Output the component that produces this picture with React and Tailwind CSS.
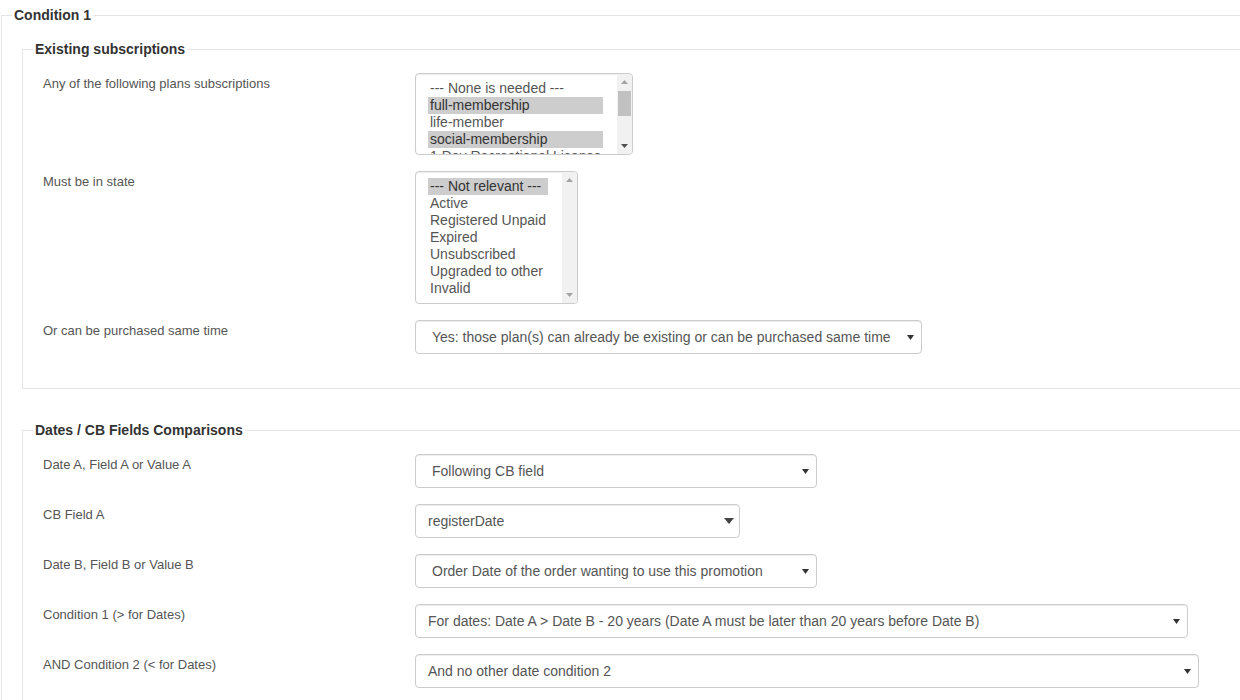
import React from 'react';

const font = { fontFamily: '"Liberation Sans", Arial, sans-serif' };

function Arrow({ big }) {
  if (big) {
    return (
      <svg width="10" height="6" viewBox="0 0 10 6" className="shrink-0">
        <polygon points="0,0 10,0 5,6" fill="#444" />
      </svg>
    );
  }
  return (
    <svg width="7" height="5" viewBox="0 0 7 5" className="shrink-0">
      <polygon points="0,0 7,0 3.5,5" fill="#333" />
    </svg>
  );
}

function Select({ width, text, pad = 'pl-4', big }) {
  return (
    <div
      className={`flex h-[34px] items-center justify-between rounded border border-[#ccc] bg-white ${pad} ${big ? 'pr-[5px]' : 'pr-[7px]'} text-[14px] text-[#555] shadow-[inset_0_1px_1px_rgba(0,0,0,0.075)]`}
      style={{ width }}
    >
      <span className="whitespace-nowrap">{text}</span>
      <Arrow big={big} />
    </div>
  );
}

function Scrollbar({ thumb }) {
  return (
    <div className="relative flex w-[15px] shrink-0 flex-col items-center justify-between bg-[#f1f1f1] py-[6px]">
      <svg width="7" height="4" viewBox="0 0 7 4">
        <polygon points="0,4 7,4 3.5,0" fill="#a3a3a3" />
      </svg>
      {thumb && (
        <div className="absolute left-[1px] top-[17px] h-[25px] w-[13px] bg-[#c1c1c1]" />
      )}
      <svg width="7" height="4" viewBox="0 0 7 4">
        <polygon points="0,0 7,0 3.5,4" fill={thumb ? '#505050' : '#a3a3a3'} />
      </svg>
    </div>
  );
}

function MultiSelect({ width, height, options, selected, pt, thumb }) {
  return (
    <div
      className="flex overflow-hidden rounded border border-[#ccc] bg-white shadow-[inset_0_1px_1px_rgba(0,0,0,0.075)]"
      style={{ width, height }}
    >
      <div className={`min-w-0 flex-1 overflow-hidden pl-3 pr-[14px] ${pt}`}>
        {options.map((o, i) => (
          <div
            key={i}
            className={`whitespace-nowrap px-[2px] text-[14px] leading-[17px] ${
              selected.includes(i) ? 'bg-[#cdcdcd] text-[#333]' : 'text-[#555]'
            }`}
          >
            {o}
          </div>
        ))}
      </div>
      <Scrollbar thumb={thumb} />
    </div>
  );
}

function Row({ label, children }) {
  return (
    <div className="flex">
      <div className="w-[372px] shrink-0 pt-[1px] text-[13px] leading-[20px] text-[#555]">{label}</div>
      {children}
    </div>
  );
}

function Legend({ children }) {
  return (
    <legend className="ml-[10px] px-[2px] text-[14px] font-bold leading-[20px] text-[#333]">
      {children}
    </legend>
  );
}

export default function App() {
  return (
    <div className="h-[700px] w-full overflow-hidden bg-white pl-[1px] pt-[5px]" style={font}>
      <fieldset className="w-[1280px] border border-[#e5e5e5] pb-10">
        <Legend>Condition 1</Legend>

        <fieldset className="ml-[20px] mt-[14px] w-[1250px] border border-[#e5e5e5]">
          <Legend>Existing subscriptions</Legend>
          <div className="flex flex-col gap-4 pb-[34px] pl-[20px] pt-[14px]">
            <Row label="Any of the following plans subscriptions">
              <MultiSelect
                width="218px"
                height="82px"
                pt="pt-[6px]"
                thumb
                selected={[1, 3]}
                options={[
                  '--- None is needed ---',
                  'full-membership',
                  'life-member',
                  'social-membership',
                  '1 Day Recreational License',
                ]}
              />
            </Row>
            <Row label="Must be in state">
              <MultiSelect
                width="163px"
                height="133px"
                pt="pt-[6px]"
                selected={[0]}
                options={[
                  '--- Not relevant ---',
                  'Active',
                  'Registered Unpaid',
                  'Expired',
                  'Unsubscribed',
                  'Upgraded to other',
                  'Invalid',
                ]}
              />
            </Row>
            <Row label="Or can be purchased same time">
              <Select width="507px" text="Yes: those plan(s) can already be existing or can be purchased same time" />
            </Row>
          </div>
        </fieldset>

        <fieldset className="ml-[20px] mt-[31px] w-[1250px] border border-[#e5e5e5]">
          <Legend>Dates / CB Fields Comparisons</Legend>
          <div className="flex flex-col gap-4 pb-[34px] pl-[20px] pt-[14px]">
            <Row label="Date A, Field A or Value A">
              <Select width="402px" text="Following CB field" />
            </Row>
            <Row label="CB Field A">
              <Select width="325px" text="registerDate" pad="pl-3" big />
            </Row>
            <Row label="Date B, Field B or Value B">
              <Select width="402px" text="Order Date of the order wanting to use this promotion" />
            </Row>
            <Row label="Condition 1 (> for Dates)">
              <Select
                width="773px"
                pad="pl-3"
                text="For dates: Date A > Date B - 20 years (Date A must be later than 20 years before Date B)"
              />
            </Row>
            <Row label="AND Condition 2 (< for Dates)">
              <Select width="784px" pad="pl-3" text="And no other date condition 2" />
            </Row>
          </div>
        </fieldset>
      </fieldset>
    </div>
  );
}
